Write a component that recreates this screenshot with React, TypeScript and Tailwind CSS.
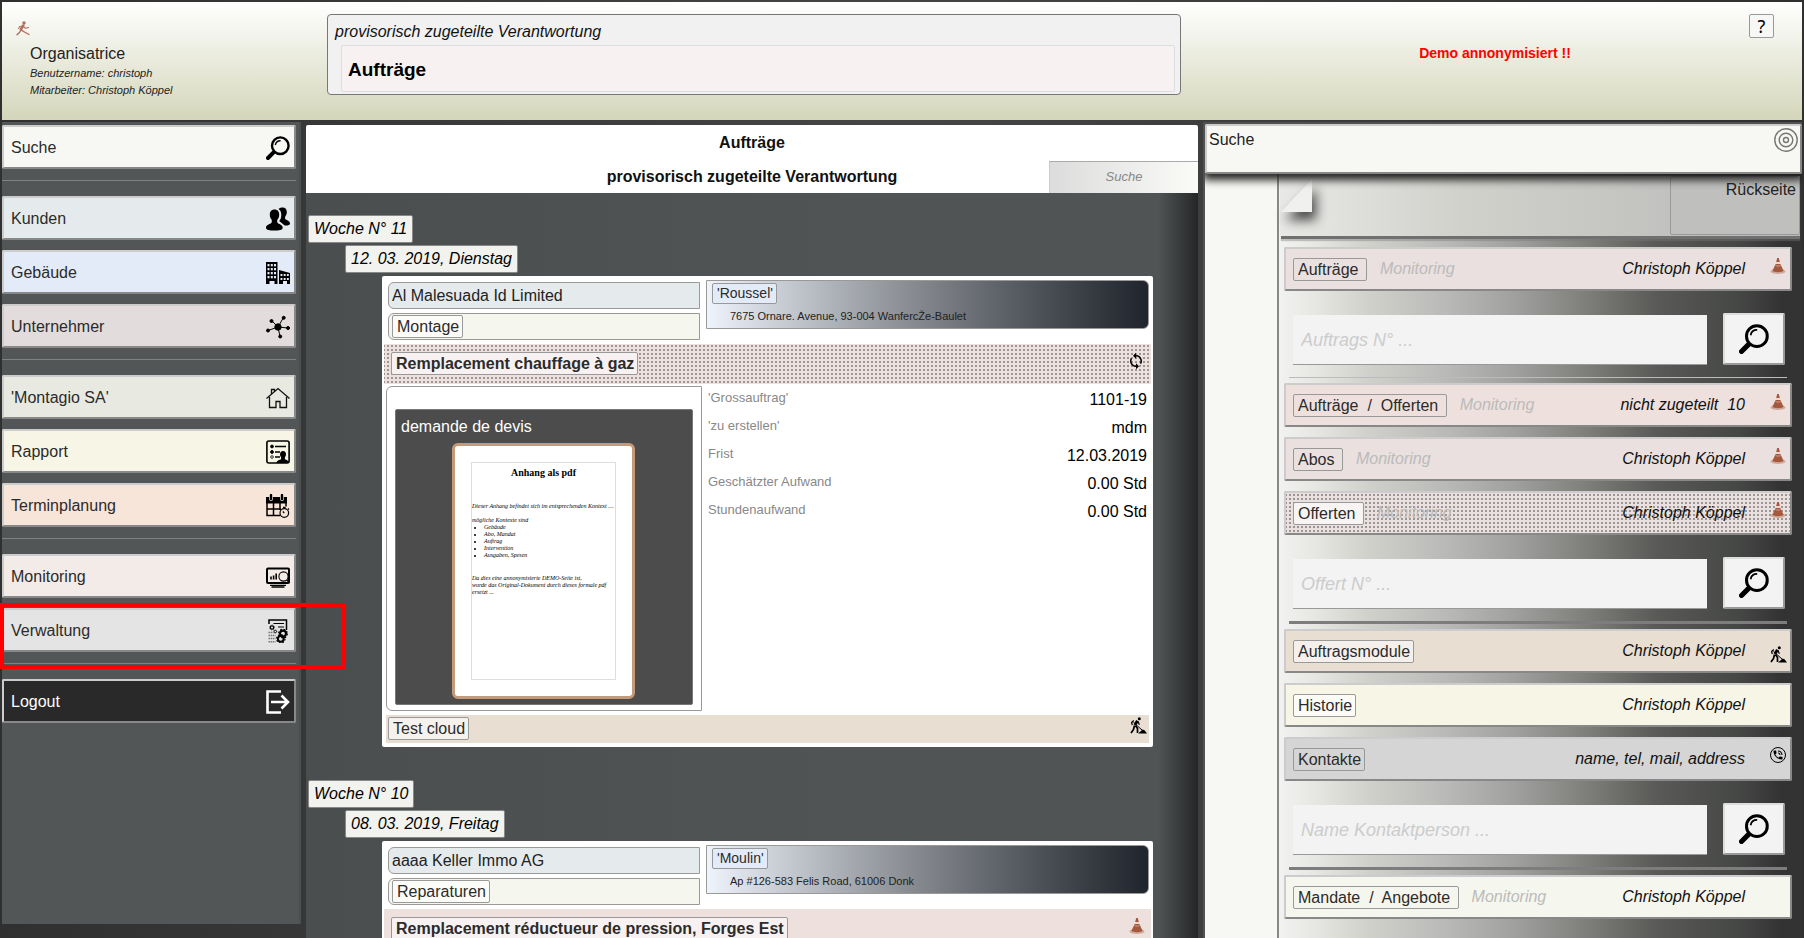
import type { ReactNode } from "react";
import clsx from "clsx";
import { MdPhoneInTalk, MdSync } from "react-icons/md";

const DOTS =
  "bg-[length:4px_4px] bg-[position:1px_1px] bg-[image:conic-gradient(at_2px_2px,#9a9693_25%,transparent_0)]";

/* ---------- icons ---------- */

const SearchIcon = ({ size = 24 }: { size?: number }) => (
  <svg width={size} height={size} viewBox="0 0 24 24" fill="none" stroke="#000">
    <circle cx="14.3" cy="9.7" r="8.3" strokeWidth="2.4" />
    <path d="M9.3 9c.5-2.600 2.600-4.300 5.300-4.200" strokeWidth="1.400" />
    <path d="M8.500 15.500 7 17" strokeWidth="3" />
    <path d="M7.300 16.700 2 22" strokeWidth="4" strokeLinecap="round" />
  </svg>
);

const UsersIcon = () => (
  <svg width="24" height="24" viewBox="0 0 24 24">
    <path d="M16.500 .5c3 0 4.300 2 4.300 4.600 0 2-.7 3.400-1.500 4.400-.5.800-.3 2.500.4 3 1.800 1 4.300 1.600 4.300 4 0 1.800-2.500 2.200-5.300 2l-5.500-4.500c1.400-1.300 2.100-3.500 2.100-6 0-3-1-5-2.900-6C13.300 1.100 14.600.5 16.500.5z" />
    <path d="M8.500 2.500c3.200 0 4.700 2.200 4.700 5 0 2.200-.7 3.900-1.700 5-.6.900-.5 3.200.5 3.800 2 1.200 4.700 1.900 4.700 4.400 0 2.300-4 2.900-8.300 2.900S0 23 0 20.700c0-2.500 3-3.200 5-4.400 1-.6 1.100-2.900.5-3.800-1-1.100-1.700-2.800-1.700-5 0-2.800 1.500-5 4.700-5z" />
  </svg>
);

const BuildingsIcon = () => (
  <svg width="24" height="24" viewBox="0 0 24 24">
    <path d="M0 1h11.500v22H8.500v-3h-5v3H0z" />
    <path d="M13 9l11 3v11h-3v-3h-4v3h-4z" />
    <g fill="#e4ebf8">
      {[3, 7, 11, 15].map((y) =>
        [1.500, 4.800, 8].map((x) => <rect key={`${x}-${y}`} x={x} y={y} width="2" height="2.300" />)
      )}
      {[13, 17].map((y) =>
        [14.500, 17.700, 20.900].map((x) => <rect key={`${x}-${y}`} x={x} y={y} width="1.900" height="2" />)
      )}
    </g>
  </svg>
);

const NetworkIcon = () => (
  <svg width="24" height="24" viewBox="0 0 24 24" stroke="#000">
    <path d="M12 12 5.500 5.500M12 12 17.500 2.500M12 12 22 13M12 12 14 21.500M12 12 2 15.500" />
    <circle cx="12" cy="12" r="3.200" />
    <circle cx="5.500" cy="6" r="1.500" />
    <circle cx="17.700" cy="2.800" r="1.500" />
    <circle cx="22" cy="13" r="1.500" />
    <circle cx="14.200" cy="21.500" r="1.500" />
    <circle cx="2" cy="15.500" r="1.500" />
  </svg>
);

const HouseIcon = () => (
  <svg width="24" height="24" viewBox="0 0 24 24" fill="none" stroke="#111" strokeWidth="1.300">
    <path d="M.5 12.500 12 2.500l11.500 10" />
    <path d="M3.500 11v10.500H10v-6h4v6h6.500V11M5.500 8V3.500H8.500v2" />
  </svg>
);

const ReportIcon = () => (
  <svg width="24" height="24" viewBox="0 0 24 24" fill="none" stroke="#000">
    <rect x=".9" y="1" width="22.200" height="22" rx="2" strokeWidth="1.600" />
    <path d="M9 6.500h11M9 12h5M9 17h5" strokeWidth="1.600" />
    <circle cx="6" cy="6.500" r="1.400" fill="#000" />
    <circle cx="6" cy="12" r="1.400" fill="#000" />
    <circle cx="6" cy="17" r="1.300" strokeWidth=".8" />
    <path
      d="M17 11c2 0 3 1.300 3 3.200 0 1.300-.6 2.300-1.100 3v2c1.600.7 4 1.300 4 3.800H10.500c0-2.500 3-3.100 4.600-3.800v-2c-.5-.7-1.100-1.700-1.100-3 0-1.900 1-3.200 3-3.200z"
      fill="#000"
      stroke="none"
    />
  </svg>
);

const CalendarIcon = () => (
  <svg width="24" height="24" viewBox="0 0 24 24" fill="none" stroke="#000">
    <path d="M0 3h21v6.500H0z" fill="#000" stroke="none" />
    <path d="M1 8v13.500h13M20 8v4.500M1 15h14M7.500 8v13.500M14 8v8" strokeWidth="1.500" />
    <path d="M5 1v4M16 1v4" stroke="#f8e5da" strokeWidth="3.800" strokeLinecap="round" />
    <path d="M5 1v4M16 1v4" strokeWidth="2.400" strokeLinecap="round" />
    <circle cx="18.300" cy="19" r="4.300" fill="#f8e5da" strokeWidth="1.200" />
    <path d="M18.300 19 16.800 17.500M17 13.300h2.600M22 14.500l1 1" strokeWidth="1.200" />
  </svg>
);

const MonitorIcon = () => (
  <svg width="24" height="24" viewBox="0 0 24 24" fill="none" stroke="#000">
    <rect x="1" y="3.500" width="22" height="14.500" rx="1" strokeWidth="2" />
    <path d="M5 14.500v-3M7.600 14.500v-4M10.200 14.500V8.500" strokeWidth="1.600" />
    <circle cx="17.500" cy="11.500" r="4.600" fill="#f3ebe7" strokeWidth="1.100" />
    <path d="m20.800 15 2.700 2.700" strokeWidth="1.500" />
    <path d="M4 20.300h16M5.500 22h13" strokeWidth="1.300" />
  </svg>
);

const Gear = ({ x, y, r }: { x: number; y: number; r: number }) => (
  <g>
    <circle cx={x} cy={y} r={r} strokeWidth={r * 0.7} />
    <circle cx={x} cy={y} r={r * 1.450} strokeWidth={r * 0.400} strokeDasharray={`${r * 0.570} ${r * 0.570}`} />
  </g>
);

const AdminIcon = () => (
  <svg width="24" height="24" viewBox="0 0 24 24" fill="none" stroke="#000">
    <path d="M3 5V1h17.500v10" strokeWidth="1.500" />
    <path d="M7.500 4.500H18M12 8h6" strokeWidth="1.200" />
    <path d="M2.500 13.500h5M2.500 16.500h7M2.500 19.500h7M2.500 22.800h7" stroke="#777" strokeWidth="1.600" strokeDasharray="1.500 .6" />
    <Gear x={6} y={8.500} r={1.700} />
    <Gear x={9.300} y={12.500} r={1.200} />
    <Gear x={17} y={14.600} r={3} />
    <Gear x={14.800} y={19.800} r={2.900} />
  </svg>
);

const LogoutIcon = () => (
  <svg width="24" height="24" viewBox="0 0 24 24" fill="none" stroke="#fff" strokeWidth="2.600">
    <path d="M15 1.500H1.500v21H15" />
    <path d="M5 12h16M15.500 5.500 22 12l-6.500 6.500" />
  </svg>
);

const TargetIcon = () => (
  <svg width="24" height="24" viewBox="0 0 24 24" fill="none" stroke="#777" strokeWidth="1.400">
    <circle cx="12" cy="12" r="11.200" />
    <circle cx="12" cy="12" r="6.800" />
    <circle cx="12" cy="12" r="2.500" />
  </svg>
);

const ConeIcon = () => (
  <svg width="16" height="18" viewBox="0 0 16 18">
    <ellipse cx="8" cy="14.500" rx="7.500" ry="2.500" fill="#cdaa9d" />
    <path d="M7.200 1h1.600l1 4H6.200z" fill="#a5583c" />
    <path d="M6.200 5h3.600l.5 2H5.700z" fill="#ead7d0" />
    <path d="M5.700 7h4.600l3.200 6.500c0 2.300-11 2.300-11 0z" fill="#a5583c" />
    <path d="M5.700 8.600c1.500.6 3.200.6 4.700 0" fill="none" stroke="#d9b9ad" strokeWidth=".8" />
  </svg>
);

const WorkerIcon = () => (
  <svg width="17" height="17" viewBox="0 0 17 17" fill="none" stroke="#000" strokeLinejoin="round">
    <circle cx="9.300" cy="1.700" r="1.500" fill="#000" stroke="none" />
    <path d="M7.500 3.800 4.800 8" strokeWidth="3" />
    <path d="M3.800 3.500 1.600 5.500 2.300 8M8 4.500l1.400 3.300" strokeWidth="1.200" />
    <path d="M4.500 8.500 3.500 12.500 1 16M5.500 8.500 7.500 11.500V16" strokeWidth="1.700" />
    <path d="M3.500 5.500 12 13" strokeWidth="1" />
    <path d="M8 16.500 11 14l1.500-1.600 2 .8 2.500 3.300z" fill="#000" stroke="none" />
  </svg>
);

const RunnerIcon = () => (
  <svg width="14" height="15" viewBox="0 0 14 15" fill="none" stroke="#b36e5c" strokeLinecap="round" strokeLinejoin="round">
    <circle cx="8" cy="2" r="1.700" fill="#b36e5c" stroke="none" />
    <path d="M7.300 4.500 4.800 8.500" strokeWidth="2.500" />
    <path d="M6.500 5 3.800 5.500 2.500 7.500M7.500 5.500 9.500 7.300 12.500 6.500" strokeWidth="1.100" />
    <path d="M5 8.800 8.500 11l4.500 2.500M4.800 9 3.500 11.500 1 13.800" strokeWidth="1.400" />
  </svg>
);

const PhoneIcon = () => (
  <span className="flex size-4 items-center justify-center rounded-full border border-black">
    <MdPhoneInTalk size={12} />
  </span>
);

/* ---------- small parts ---------- */

const Tag = ({ children, className }: { children: ReactNode; className?: string }) => (
  <span
    className={clsx(
      "inline-block whitespace-pre rounded-xs border border-[#999] pr-[3px] pl-1 leading-[21px] text-[#2b2b2b]",
      className
    )}
  >
    {children}
  </span>
);

const BEVEL = "rounded-xs border-2 border-t-[#ccc] border-l-[#ccc] border-r-[#888] border-b-[#888]";

const NAV: { label: string; color: string; icon: ReactNode }[][] = [
  [{ label: "Suche", color: "bg-[#f7f8f3]", icon: <SearchIcon /> }],
  [
    { label: "Kunden", color: "bg-[#e5ebed]", icon: <UsersIcon /> },
    { label: "Gebäude", color: "bg-[#e4ebf8]", icon: <BuildingsIcon /> },
    { label: "Unternehmer", color: "bg-[#e2dcdc]", icon: <NetworkIcon /> },
  ],
  [
    { label: "'Montagio SA'", color: "bg-[#e8e9e1]", icon: <HouseIcon /> },
    { label: "Rapport", color: "bg-[#f7f5e6]", icon: <ReportIcon /> },
    { label: "Terminplanung", color: "bg-[#f8e5da]", icon: <CalendarIcon /> },
  ],
  [
    { label: "Monitoring", color: "bg-[#f3ebe7]", icon: <MonitorIcon /> },
    { label: "Verwaltung", color: "bg-[#e4e4e4]", icon: <AdminIcon /> },
  ],
  [{ label: "Logout", color: "bg-[#292929] text-white", icon: <LogoutIcon /> }],
];

const Sidebar = () => (
  <nav className="mb-3.5 flex flex-col border-r-2 border-[#4b4f50] bg-[#525657] pt-[3px] pr-[3px]">
    {NAV.map((group, i) => (
      <div
        key={group[0].label}
        className={clsx("flex flex-col gap-2.5", i > 0 && "mt-[11px] border-t border-[#808282] pt-[15px]")}
      >
        {group.map((item) => (
          <button
            key={item.label}
            className={clsx(
              "flex h-11 items-center justify-between pt-0.5 pr-1 pl-[7px] text-[#2b2b2b]",
              BEVEL,
              item.color
            )}
          >
            {item.label}
            {item.icon}
          </button>
        ))}
      </div>
    ))}
  </nav>
);

const Header = () => (
  <header className="flex h-[118px] shrink-0 items-start bg-linear-to-b from-white to-[#d4d6ba]">
    <div className="w-[325px] shrink-0 pt-[19px] pl-3.5">
      <RunnerIcon />
      <div className="pt-2 pl-3.5 text-[#222]">
        <p className="text-base leading-5">Organisatrice</p>
        <p className="text-[11px] leading-[18px] italic">Benutzername: christoph</p>
        <p className="text-[11px] leading-4 italic">Mitarbeiter: Christoph Köppel</p>
      </div>
    </div>
    <div className="mt-3 w-[854px] shrink-0 rounded-sm border border-[#777] bg-[#f1f1f1] pt-1.5 pr-[5px] pb-0.5 pl-[13px]">
      <p className="-ml-1.5 text-base leading-[22px] text-[#111] italic">provisorisch zugeteilte Verantwortung</p>
      <h1 className="mt-0.5 rounded-xs border border-[#dedee0] bg-[#f7f2f1] px-1.5 pt-[13px] pb-2.5 text-[19px] leading-[22px] font-bold">
        Aufträge
      </h1>
    </div>
    <p className="flex-1 pt-[41px] pl-10 text-center text-sm leading-5 font-bold text-[#f00]">Demo annonymisiert !!</p>
    <button className="mt-3 mr-7 -ml-5 h-6 w-[25px] rounded-xs border border-[#999] bg-[#f7f7f5] font-['Noto_Sans',sans-serif] text-lg leading-5">
      ?
    </button>
  </header>
);

/* ---------- orders ---------- */

const Attachment = () => (
  <div className="h-[325px] w-[316px] shrink-0 rounded-l-md border border-[#999a95] px-2 pt-[22px] pb-[5px]">
    <div className="flex h-full flex-col rounded-xs border border-[#777] bg-[#4c4c4c]">
      <p className="px-[5px] pt-[7px] text-base leading-5 text-white">demande de devis</p>
      <div className="mt-1.5 ml-14 h-64 w-[183px] rounded-md border-3 border-[#c49b7a] bg-white p-4">
        <div className="h-[218px] border border-[#ddd] font-['Liberation_Serif',serif] text-[6px] leading-[7px] whitespace-nowrap text-black italic">
          <p className="pt-1 text-center text-[10px] leading-3 font-bold not-italic">Anhang als pdf</p>
          <p className="pt-6">Dieser Anhang befindet sich im entsprechenden Kontext …</p>
          <p className="pt-[7px]">mögliche Kontexte sind</p>
          <ul className="list-disc pl-3">
            <li>Gebäude</li>
            <li>Abo, Mandat</li>
            <li>Auftrag</li>
            <li>Intervention</li>
            <li>Ausgaben, Spesen</li>
          </ul>
          <p className="pt-4">
            Da dies eine annonymisierte DEMO-Seite ist,
            <br />
            wurde das Original-Dokument durch dieses formale pdf
            <br />
            ersetzt ...
          </p>
        </div>
      </div>
    </div>
  </div>
);

interface Order {
  week: string;
  date: string;
  client: string;
  kind: string;
  building: string;
  address: string;
  title: string;
  repeating?: boolean;
  details?: [string, string][];
}

const ORDERS: Order[] = [
  {
    week: "Woche N° 11",
    date: "12. 03. 2019, Dienstag",
    client: "Al Malesuada Id Limited",
    kind: "Montage",
    building: "'Roussel'",
    address: "7675 Ornare. Avenue, 93-004 WanfercŽe-Baulet",
    title: "Remplacement chauffage à gaz",
    repeating: true,
    details: [
      ["'Grossauftrag'", "1101-19"],
      ["'zu erstellen'", "mdm"],
      ["Frist", "12.03.2019"],
      ["Geschätzter Aufwand", "0.00 Std"],
      ["Stundenaufwand", "0.00 Std"],
    ],
  },
  {
    week: "Woche N° 10",
    date: "08. 03. 2019, Freitag",
    client: "aaaa Keller Immo AG",
    kind: "Reparaturen",
    building: "'Moulin'",
    address: "Ap #126-583 Felis Road, 61006 Donk",
    title: "Remplacement réductueur de pression, Forges Est",
  },
];

const OrderCard = ({ order }: { order: Order }) => (
  <article className="mr-[45px] ml-[76px] rounded-xs bg-white pb-1">
    <div className="flex gap-1.5 pr-1 pb-1 pl-1.5">
      <div className="flex w-[312px] shrink-0 flex-col gap-1 pt-1.5">
        <div className="h-[27px] rounded-l-md border border-[#999a95] bg-[#e5ebed] px-[3px] text-base leading-[26px] text-[#222]">
          {order.client}
        </div>
        <div className="flex h-[27px] items-center rounded-l-md border border-[#999a95] bg-[#f5f6ed] px-[3px]">
          <Tag className="bg-white/60 text-base">{order.kind}</Tag>
        </div>
      </div>
      <div className="mt-1 flex h-[49px] flex-1 flex-col items-start rounded-r-md border border-[#999a95] bg-linear-to-r from-[#eef3fc] via-[#8b8f94] via-45% to-[#20242c] pt-0.5 pl-[5px]">
        <Tag className="bg-[#e4ebf8] text-sm !leading-[19px]">{order.building}</Tag>
        <p className="pl-[18px] text-[11px] leading-6 text-[#222]">{order.address}</p>
      </div>
    </div>
    <div
      className={clsx("mx-0.5 flex h-10 items-start justify-between bg-[#eee0dc] pt-2 pr-1.5 pl-[7px]", order.repeating && DOTS)}
    >
      <Tag className="bg-[#f7f2f1] text-base font-bold">{order.title}</Tag>
      {order.repeating ? <MdSync size={18} /> : <ConeIcon />}
    </div>
    {order.details && (
      <>
        <div className="flex px-1 pt-0.5 pb-1">
          <Attachment />
          <dl className="flex-1 pr-0.5 pl-1.5">
            {order.details.map(([name, value]) => (
              <div key={name} className="flex h-7 justify-between">
                <dt className="text-[13px] leading-6 text-[#888]">{name}</dt>
                <dd className="text-base leading-7 text-black">{value}</dd>
              </div>
            ))}
          </dl>
        </div>
        <div className="mx-1 flex h-7 items-start justify-between bg-[#e8ded2] pt-0.5 pr-0.5 pl-0.5">
          <Tag className="bg-[#f5f2ed] text-base">Test cloud</Tag>
          <WorkerIcon />
        </div>
      </>
    )}
  </article>
);

const LABEL = "w-fit rounded-xs border border-[#888] bg-[#f2f2ee] px-[5px] text-base leading-[26px] italic";

const Orders = () => (
  <main className="mt-[3px] flex min-w-0 flex-col overflow-hidden rounded-t-xs">
    <div className="grid h-[68px] shrink-0 grid-cols-[1fr_auto_1fr] bg-white text-center text-base font-bold text-[#111]">
      <h2 className="col-span-3 leading-9">Aufträge</h2>
      <h3 className="col-start-2 leading-8">provisorisch zugeteilte Verantwortung</h3>
      <input
        aria-label="Suche"
        placeholder="Suche"
        className="h-8 w-[149px] justify-self-end border-t border-l border-t-[#aaa] border-l-[#ccc] bg-linear-to-r from-[#dcdcdc] to-[#fbfcf8] pb-[3px] text-center text-[13px] font-normal italic placeholder:text-[#888]"
      />
    </div>
    <div className="min-h-0 flex-1 overflow-hidden bg-[linear-gradient(to_right,#4a4e4f,#505455_60%,#505455_calc(100%-40px),#252727)]">
      {ORDERS.map((order) => (
        <section key={order.week} className="pt-[22px] pb-[11px]">
          <h4 className={clsx("ml-0.5", LABEL)}>{order.week}</h4>
          <h5 className={clsx("mt-0.5 mb-[3px] ml-[39px]", LABEL)}>{order.date}</h5>
          <OrderCard order={order} />
        </section>
      ))}
    </div>
  </main>
);

/* ---------- search panel ---------- */

interface RowProps {
  label: string;
  info?: string;
  color: string;
  tagColor?: string;
  monitoring?: boolean;
  dotted?: boolean;
  icon?: ReactNode;
}

const Row = ({ label, info = "Christoph Köppel", color, tagColor, monitoring, dotted, icon }: RowProps) => (
  <button className={clsx("flex h-11 w-full items-center pr-[3px] pl-[7px] text-base", BEVEL, color, dotted && DOTS)}>
    <Tag className={tagColor}>{label}</Tag>
    {monitoring && <i className="ml-[13px] text-[#bbb]">Monitoring</i>}
    <i className="ml-auto whitespace-pre text-[#111]">{info}</i>
    <span className="ml-6 flex h-6 w-[18px] items-start justify-center">{icon}</span>
  </button>
);

const SearchField = ({ placeholder, line }: { placeholder: string; line: string }) => (
  <form className={clsx("mx-[5px] flex items-end justify-between pt-3 pr-0.5 pb-3 pl-1", line)}>
    <input
      aria-label={placeholder}
      placeholder={placeholder}
      className="h-[50px] w-[414px] border-b border-[#999] bg-[#f3f3f3] px-2 pt-0.5 text-lg italic placeholder:text-[#ccc]"
    />
    <button
      type="button"
      aria-label="Suchen"
      className="flex h-[52px] w-[62px] items-center justify-center rounded-xs border-2 border-t-[#ddd] border-r-[#999] border-b-[#999] border-l-[#ddd] bg-[#f3f3f3]"
    >
      <SearchIcon size={30} />
    </button>
  </form>
);

const SearchPanel = () => (
  <aside className="flex min-w-0 flex-col overflow-hidden border-t-2 border-l-2 border-[#505252]">
    <div
      className={clsx(
        "relative z-10 flex h-[50px] shrink-0 justify-between bg-[#f7f8f3] px-0.5 pt-0.5 shadow-[0_4px_8px_2px_#222]",
        BEVEL
      )}
    >
      <h2 className="text-base leading-6 text-[#222]">Suche</h2>
      <button aria-label="Ziel" className="self-start">
        <TargetIcon />
      </button>
    </div>
    <div className="flex min-h-0 flex-1">
      <div className="w-[74px] shrink-0 border-r-2 border-[#888] bg-[#f7f8f3]" />
      <div className="min-w-0 flex-1 bg-[linear-gradient(to_right,#f2f2f2,#e6e6e2_7%,#d0d1cb_17%,#b9b9b8_32%,#a0a09f_45%,#80807c_58%,#5a5a58_72%,#454745_88%,#333_96%)]">
        <div className="mx-0.5 mt-0.5 flex h-[63px] justify-between border-b-3 border-[#707070] bg-[linear-gradient(to_right,#e8e8e6,#d0d1cb_35%,#b8b8b8)] shadow-[0_2px_1px_#7776]">
          <svg width="50" height="60" viewBox="0 0 50 60" className="drop-shadow-[4px_8px_6px_#444]">
            <path d="M31 3v33H0z" fill="#f0f0ee" />
          </svg>
          <button className="h-[59px] w-[130px] rounded-xs border border-[#999] bg-[#bfbfbe] px-[3px] text-right text-base leading-5 text-[#222]">
            <span className="block h-full pt-[3px]">Rückseite</span>
          </button>
        </div>
        <div className="flex flex-col pt-2 pr-2.5 pl-[5px]">
          <Row label={"Aufträge "} monitoring color="bg-[#e9e0df]" icon={<ConeIcon />} />
          <div className="pt-2.5 pb-[5px]">
            <SearchField placeholder="Auftrags N° ..." line="border-b border-[#bbb]" />
          </div>
          <div className="flex flex-col gap-2.5">
            <Row
              label={"Aufträge  /  Offerten "}
              monitoring
              info={"nicht zugeteilt  10"}
              color="bg-[#eee0dc]"
              icon={<ConeIcon />}
            />
            <Row label={"Abos "} monitoring color="bg-[#e9e0df]" icon={<ConeIcon />} />
            <Row label={"Offerten "} monitoring dotted color="bg-[#e9e0df]" tagColor="bg-[#f7f4f3]" icon={<ConeIcon />} />
          </div>
          <div className="pt-2.5 pb-[5px]">
            <SearchField placeholder="Offert N° ..." line="border-b-3 border-[#7d7d7d]" />
          </div>
          <div className="flex flex-col gap-2.5">
            <Row
              label="Auftragsmodule"
              color="bg-[#e8ded2]"
              tagColor="bg-[#f5f0ec]"
              icon={
                <span className="self-end">
                  <WorkerIcon />
                </span>
              }
            />
            <Row label="Historie" color="bg-[#f7f5e6]" tagColor="bg-[#fcfbf7]" />
            <Row label="Kontakte" info="name, tel, mail, address" color="bg-[#d5d5d5]" icon={<PhoneIcon />} />
          </div>
          <div className="pt-2.5 pb-[5px]">
            <SearchField placeholder="Name Kontaktperson ..." line="border-b-3 border-[#7d7d7d]" />
          </div>
          <Row label={"Mandate  /  Angebote "} monitoring color="bg-[#f5f6ed]" />
        </div>
      </div>
    </div>
  </aside>
);

export default function App() {
  return (
    <div className="relative flex h-screen flex-col overflow-hidden bg-linear-to-r from-[#303030] via-[#454545] to-[#303030] px-0.5 pt-0.5 font-['Liberation_Sans',Arial,sans-serif]">
      <Header />
      <div className="mt-0.5 grid min-h-0 flex-1 grid-cols-[299px_minmax(0,1fr)_599px] gap-[5px]">
        <Sidebar />
        <Orders />
        <SearchPanel />
      </div>
      {/* highlight around "Verwaltung" */}
      <div className="pointer-events-none absolute top-[603px] left-0 h-[66px] w-[345px] border-4 border-[#f00]" />
    </div>
  );
}
